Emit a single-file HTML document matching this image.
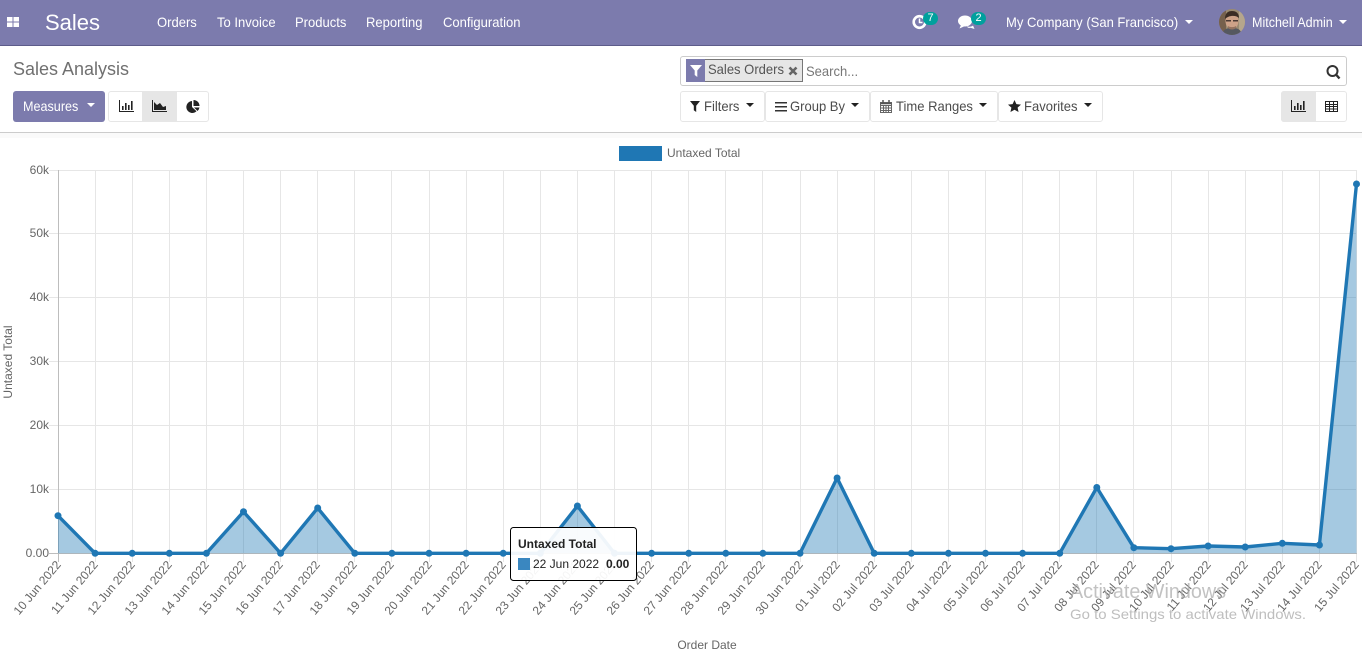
<!DOCTYPE html>
<html><head><meta charset="utf-8"><title>Sales Analysis</title>
<style>
html,body{margin:0;padding:0;background:#fff;width:1362px;height:657px;overflow:hidden;font-family:"Liberation Sans",sans-serif}
.a{position:absolute;white-space:nowrap}
#nav{position:absolute;left:0;top:0;width:1362px;height:45px;background:#7c7bad;border-bottom:1px solid #5d5c8a}
.n{position:absolute;top:12px;line-height:20px;font-size:14px;color:#fff;white-space:nowrap;transform-origin:left center;transform:scaleX(.93)}
.caret{position:absolute;width:0;height:0;border-left:4px solid transparent;border-right:4px solid transparent;border-top:4px solid #fff}
.caret.d{border-top-color:#222}
.btn{position:absolute;top:91px;height:29px;background:#fff;border:1px solid #e6e6e6;border-radius:3px}
.bt{position:absolute;top:96px;line-height:20px;font-size:14px;color:#4c4c4c;white-space:nowrap;transform-origin:left center;transform:scaleX(.93)}
.badge{position:absolute;top:12px;height:13px;width:15px;border-radius:7px;background:#00a09d;color:#fff;font-size:11px;line-height:13px;text-align:center}
svg{position:absolute;overflow:visible}
svg text{font-family:"Liberation Sans",sans-serif}
</style></head><body>

<div id="nav"></div>
<svg style="left:7px;top:17px" width="12" height="10" viewBox="0 0 12 10"><path fill="#fff" d="M0 0h5.500v4.500H0zM6.500 0h5.500v4.500H6.500zM0 5.500h5.500v4.500H0zM6.500 5.500h5.500v4.500H6.500z"/></svg>
<div class="a" style="left:45px;top:9px;line-height:28px;font-size:22px;color:#fff">Sales</div>
<div class="n" style="left:157px">Orders</div>
<div class="n" style="left:217px">To Invoice</div>
<div class="n" style="left:295px">Products</div>
<div class="n" style="left:366px">Reporting</div>
<div class="n" style="left:443px">Configuration</div>

<svg style="left:912px;top:14px" width="16" height="16" viewBox="0 0 16 16"><circle cx="7.500" cy="8" r="5.800" fill="none" stroke="#fff" stroke-width="2.600"/><path d="M7.500 4.500V8.500H10.500" fill="none" stroke="#fff" stroke-width="1.500"/></svg>
<div class="badge" style="left:923px">7</div>
<svg style="left:958px;top:15px" width="17" height="15" viewBox="0 0 17 15"><ellipse cx="7" cy="6" rx="7" ry="5.500" fill="#fff"/><path d="M3 10L1.500 13.500 7 11zM9 11.500c3 .5 5 0 6-1l1.500 3.500-4-1.200c-1.500.3-3 0-3.500-1.300z" fill="#fff"/></svg>
<div class="badge" style="left:971px">2</div>
<div class="n" style="left:1006px">My Company (San Francisco)</div>
<div class="caret" style="left:1185px;top:20px"></div>
<svg style="left:1219px;top:9px" width="26" height="26" viewBox="0 0 26 26"><defs><clipPath id="av"><circle cx="13" cy="13" r="13"/></clipPath></defs><g clip-path="url(#av)"><rect width="26" height="26" fill="#9a8a70"/><rect x="0" y="0" width="7" height="26" fill="#75604c"/><rect x="20" y="0" width="6" height="26" fill="#b5a68c"/><path d="M3 26c1-6 5-7 10-7s9 1 10 7z" fill="#555860"/><ellipse cx="13" cy="12" rx="6.500" ry="8" fill="#cda288"/><path d="M6 10c0-6 3-8 7-8s7 2 7 7c-3-3-10-3-14 1z" fill="#3a2c24"/><path d="M7 11h5v1.500H7zM14 11h5v1.500h-5z" fill="#4a3a34"/><path d="M9 17c2 1.500 6 1.500 8 0v2c-2 2-6 2-8 0z" fill="#94735f"/></g></svg>
<div class="n" style="left:1252px;transform:scaleX(.895)">Mitchell Admin</div>
<div class="caret" style="left:1339px;top:20px"></div>

<div class="a" style="left:13px;top:58px;line-height:22px;font-size:18px;color:#707070">Sales Analysis</div>

<div class="a" style="left:13px;top:91px;width:92px;height:31px;background:#7c7bad;border-radius:3px"></div>
<div class="bt" style="left:23px;color:#fff;transform:scaleX(.9)">Measures</div>
<div class="caret" style="left:87px;top:103px"></div>

<div class="a" style="left:108px;top:91px;width:99px;height:29px;background:#fff;border:1px solid #e6e6e6;border-radius:3px"></div>
<div class="a" style="left:142px;top:92px;width:35px;height:29px;background:#e6e6e6"></div>
<svg style="left:119px;top:100px" width="15" height="13" viewBox="0 0 15 13"><path fill="#222" d="M0 0h1v11h14v1H0z"/><path fill="#222" d="M3 6h1.600v4H3zM6 3h1.600v7H6zM9 5h1.600v5H9zM12 1h1.600v9H12z"/></svg>
<svg style="left:152px;top:100px" width="15" height="13" viewBox="0 0 15 13"><path fill="#222" d="M0 0h1v11h14v1H0z"/><path fill="#222" d="M2 10V2l3 3 3-2 3 4 3-1v4z"/></svg>
<svg style="left:186px;top:100px" width="14" height="13" viewBox="0 0 14 13"><path fill="#222" d="M6 1v6l4.500 4.300A6 6 0 1 1 6 1z"/><path fill="#222" d="M7.500 0A6 6 0 0 1 13.500 6H7.500z"/><path fill="#222" d="M8 7.500h5.500A6 6 0 0 1 11.500 11z"/></svg>

<div class="a" style="left:680px;top:56px;width:665px;height:28px;border:1px solid #ccc;border-radius:3px;background:#fff"></div>
<div class="a" style="left:686px;top:59px;width:115px;height:21px;background:#e6e6e6;border:1px solid #777"></div>
<div class="a" style="left:686px;top:59px;width:19px;height:23px;background:#7c7bad"></div>
<svg style="left:690px;top:65px" width="12" height="12" viewBox="0 0 12 12"><path fill="#fff" d="M0 0h12L7.300 5.500V12L4.700 10V5.500z"/></svg>
<div class="a" style="left:708px;top:60px;line-height:18px;font-size:14px;color:#555;transform-origin:left center;transform:scaleX(.93)">Sales Orders</div>
<svg style="left:788px;top:66px" width="10" height="10" viewBox="0 0 10 10"><path d="M1.500 1.500l7 7M8.500 1.500l-7 7" stroke="#666" stroke-width="2.600"/></svg>
<div class="a" style="left:806px;top:62px;line-height:18px;font-size:14px;color:#777;transform-origin:left center;transform:scaleX(.93)">Search...</div>
<svg style="left:1326px;top:65px" width="15" height="15" viewBox="0 0 15 15"><circle cx="6.500" cy="6" r="5" fill="none" stroke="#333" stroke-width="2"/><path d="M10 9.500L13.500 13.500" stroke="#333" stroke-width="2.400"/></svg>

<div class="btn" style="left:680px;width:83px"></div>
<svg style="left:690px;top:101px" width="10" height="11" viewBox="0 0 10 11"><path fill="#222" d="M0 0h10L6.200 4.800V11L3.800 9.300V4.800z"/></svg>
<div class="bt" style="left:704px">Filters</div>
<div class="caret d" style="left:746px;top:103px"></div>

<div class="btn" style="left:765px;width:103px"></div>
<svg style="left:775px;top:102px" width="12" height="10" viewBox="0 0 12 10"><path fill="#333" d="M0 0h12v1.500H0zM0 4h12v1.500H0zM0 8h12v1.500H0z"/></svg>
<div class="bt" style="left:790px">Group By</div>
<div class="caret d" style="left:851px;top:103px"></div>

<div class="btn" style="left:870px;width:126px"></div>
<svg style="left:880px;top:100px" width="12" height="13" viewBox="0 0 12 13"><path fill="none" stroke="#666" d="M.5 2.500h11v10H.5zM.5 5.500h11M.5 8h11M.5 10.500h11M3.500 5.500v7M6 5.500v7M8.500 5.500v7"/><path stroke="#555" stroke-width="1.500" d="M3 0v3M9 0v3M.5 3.500h11"/></svg>
<div class="bt" style="left:896px">Time Ranges</div>
<div class="caret d" style="left:979px;top:103px"></div>

<div class="btn" style="left:998px;width:103px"></div>
<svg style="left:1008px;top:100px" width="13" height="12" viewBox="0 0 13 12"><path fill="#222" d="M6.500 0l1.900 4.100 4.600.5-3.400 3 .950 4.400L6.500 9.800 2.450 12l.950-4.400-3.400-3 4.600-.5z"/></svg>
<div class="bt" style="left:1024px">Favorites</div>
<div class="caret d" style="left:1084px;top:103px"></div>

<div class="a" style="left:1281px;top:91px;width:64px;height:29px;border:1px solid #e6e6e6;border-radius:3px;background:#fff"></div>
<div class="a" style="left:1281px;top:91px;width:35px;height:31px;background:#e6e6e6;border-radius:3px 0 0 3px"></div>
<svg style="left:1291px;top:100px" width="15" height="13" viewBox="0 0 15 13"><path fill="#222" d="M0 0h1v11h14v1H0z"/><path fill="#222" d="M3 6h1.600v4H3zM6 3h1.600v7H6zM9 5h1.600v5H9zM12 1h1.600v9H12z"/></svg>
<svg style="left:1325px;top:101px" width="13" height="11" viewBox="0 0 13 11"><path fill="none" stroke="#222" d="M.5.500h12v10H.5zM.5 3.500h12M.5 5.500h12M.5 8h12M4.500.5v10M8.500.5v10"/></svg>

<div class="a" style="left:0;top:132px;width:1362px;height:1px;background:#ccc"></div>
<div class="a" style="left:0;top:133px;width:1362px;height:5px;background:#fafafa"></div>

<svg style="left:0;top:0" width="1362" height="657" viewBox="0 0 1362 657">
<rect x="619" y="146" width="43" height="15" fill="#1f77b4"/>
<text x="667" y="157" font-size="12" fill="#666">Untaxed Total</text>

<path stroke="#e6e6e6" fill="none" d="M49 170.500H1357M49 233.500H1357M49 297.500H1357M49 361.500H1357M49 425.500H1357M49 489.500H1357
M95.500 170V562M132.500 170V562M169.500 170V562M206.500 170V562M243.500 170V562M280.500 170V562M317.500 170V562M354.500 170V562M391.500 170V562M429.500 170V562M466.500 170V562M503.500 170V562M540.500 170V562M577.500 170V562M614.500 170V562M651.500 170V562M688.500 170V562M725.500 170V562M762.500 170V562M800.500 170V562M837.500 170V562M874.500 170V562M911.500 170V562M948.500 170V562M985.500 170V562M1022.500 170V562M1059.500 170V562M1096.500 170V562M1133.500 170V562M1171.500 170V562M1208.500 170V562M1245.500 170V562M1282.500 170V562M1319.500 170V562M1356.500 170V562"/>
<path stroke="#bdbdbd" fill="none" d="M58.500 170V562M49 553.500H1357"/>

<g font-size="12" fill="#666" text-anchor="end">
<text x="49" y="174">60k</text><text x="49" y="237">50k</text><text x="49" y="301">40k</text><text x="49" y="365">30k</text><text x="49" y="429">20k</text><text x="49" y="493">10k</text><text x="49" y="557">0.00</text>
</g>
<text transform="translate(12,362) rotate(-90)" font-size="12" fill="#666" text-anchor="middle">Untaxed Total</text>
<text x="707" y="649" font-size="12" fill="#666" text-anchor="middle">Order Date</text>

<path fill="#1f77b4" fill-opacity=".4" d="M58 553.300V515.700L95.100 553.300H206.400L243.500 511.700 280.600 553.300 317.700 508 354.800 553.300H540.300L577.400 506 614.500 553.300H800L837.100 478 874.200 553.300H1059.700L1096.800 487.500 1133.900 547.700 1171 548.700 1208.100 546 1245.200 547 1282.300 543.300 1319.400 545 1356.500 184V553.300z"/>
<path fill="none" stroke="#1f77b4" stroke-width="3.400" stroke-linejoin="round" d="M58 515.700L95.100 553.300H206.400L243.500 511.700 280.600 553.300 317.700 508 354.800 553.300H540.300L577.400 506 614.500 553.300H800L837.100 478 874.200 553.300H1059.700L1096.800 487.500 1133.900 547.700 1171 548.700 1208.100 546 1245.200 547 1282.300 543.300 1319.400 545 1356.500 184"/>
<g fill="#1f77b4">
<circle cx="58" cy="515.700" r="3.500"/><circle cx="95.100" cy="553.300" r="3.500"/><circle cx="132.200" cy="553.300" r="3.500"/><circle cx="169.300" cy="553.300" r="3.500"/><circle cx="206.400" cy="553.300" r="3.500"/><circle cx="243.500" cy="511.700" r="3.500"/><circle cx="280.600" cy="553.300" r="3.500"/><circle cx="317.700" cy="508" r="3.500"/><circle cx="354.800" cy="553.300" r="3.500"/><circle cx="391.900" cy="553.300" r="3.500"/><circle cx="429" cy="553.300" r="3.500"/><circle cx="466.100" cy="553.300" r="3.500"/><circle cx="503.200" cy="553.300" r="3.500"/><circle cx="540.300" cy="553.300" r="3.500"/><circle cx="577.400" cy="506" r="3.500"/><circle cx="614.500" cy="553.300" r="3.500"/><circle cx="651.600" cy="553.300" r="3.500"/><circle cx="688.700" cy="553.300" r="3.500"/><circle cx="725.800" cy="553.300" r="3.500"/><circle cx="762.900" cy="553.300" r="3.500"/><circle cx="800" cy="553.300" r="3.500"/><circle cx="837.100" cy="478" r="3.500"/><circle cx="874.200" cy="553.300" r="3.500"/><circle cx="911.300" cy="553.300" r="3.500"/><circle cx="948.400" cy="553.300" r="3.500"/><circle cx="985.500" cy="553.300" r="3.500"/><circle cx="1022.600" cy="553.300" r="3.500"/><circle cx="1059.700" cy="553.300" r="3.500"/><circle cx="1096.800" cy="487.500" r="3.500"/><circle cx="1133.900" cy="547.700" r="3.500"/><circle cx="1171" cy="548.700" r="3.500"/><circle cx="1208.100" cy="546" r="3.500"/><circle cx="1245.200" cy="547" r="3.500"/><circle cx="1282.300" cy="543.300" r="3.500"/><circle cx="1319.400" cy="545" r="3.500"/><circle cx="1356.500" cy="184" r="3.500"/>
</g>

<g font-size="12" fill="#666" text-anchor="end" transform="translate(-1.500,-1)">
<text transform="translate(63,566) rotate(-50)">10 Jun 2022</text>
<text transform="translate(100,566) rotate(-50)">11 Jun 2022</text>
<text transform="translate(137,566) rotate(-50)">12 Jun 2022</text>
<text transform="translate(174,566) rotate(-50)">13 Jun 2022</text>
<text transform="translate(211,566) rotate(-50)">14 Jun 2022</text>
<text transform="translate(248,566) rotate(-50)">15 Jun 2022</text>
<text transform="translate(285,566) rotate(-50)">16 Jun 2022</text>
<text transform="translate(322,566) rotate(-50)">17 Jun 2022</text>
<text transform="translate(359,566) rotate(-50)">18 Jun 2022</text>
<text transform="translate(396,566) rotate(-50)">19 Jun 2022</text>
<text transform="translate(434,566) rotate(-50)">20 Jun 2022</text>
<text transform="translate(471,566) rotate(-50)">21 Jun 2022</text>
<text transform="translate(508,566) rotate(-50)">22 Jun 2022</text>
<text transform="translate(545,566) rotate(-50)">23 Jun 2022</text>
<text transform="translate(582,566) rotate(-50)">24 Jun 2022</text>
<text transform="translate(619,566) rotate(-50)">25 Jun 2022</text>
<text transform="translate(656,566) rotate(-50)">26 Jun 2022</text>
<text transform="translate(693,566) rotate(-50)">27 Jun 2022</text>
<text transform="translate(730,566) rotate(-50)">28 Jun 2022</text>
<text transform="translate(767,566) rotate(-50)">29 Jun 2022</text>
<text transform="translate(805,566) rotate(-50)">30 Jun 2022</text>
<text transform="translate(842,566) rotate(-50)">01 Jul 2022</text>
<text transform="translate(879,566) rotate(-50)">02 Jul 2022</text>
<text transform="translate(916,566) rotate(-50)">03 Jul 2022</text>
<text transform="translate(953,566) rotate(-50)">04 Jul 2022</text>
<text transform="translate(990,566) rotate(-50)">05 Jul 2022</text>
<text transform="translate(1027,566) rotate(-50)">06 Jul 2022</text>
<text transform="translate(1064,566) rotate(-50)">07 Jul 2022</text>
<text transform="translate(1101,566) rotate(-50)">08 Jul 2022</text>
<text transform="translate(1138,566) rotate(-50)">09 Jul 2022</text>
<text transform="translate(1176,566) rotate(-50)">10 Jul 2022</text>
<text transform="translate(1213,566) rotate(-50)">11 Jul 2022</text>
<text transform="translate(1250,566) rotate(-50)">12 Jul 2022</text>
<text transform="translate(1287,566) rotate(-50)">13 Jul 2022</text>
<text transform="translate(1324,566) rotate(-50)">14 Jul 2022</text>
<text transform="translate(1361,566) rotate(-50)">15 Jul 2022</text>
</g>

<rect x="510.500" y="527.500" width="126" height="53" rx="3" fill="#fff" fill-opacity=".93" stroke="#000"/>
<text x="518" y="548" font-size="12" font-weight="bold" fill="#222">Untaxed Total</text>
<rect x="518" y="558" width="12" height="12" fill="#3a87c0"/>
<text x="533" y="568" font-size="12" fill="#222">22 Jun 2022</text>
<text x="606" y="568" font-size="12" font-weight="bold" fill="#222">0.00</text>

<text x="1070" y="598" font-size="20" fill="#a8a8a8" fill-opacity=".7" textLength="156" lengthAdjust="spacingAndGlyphs">Activate Windows</text>
<text x="1070" y="619" font-size="14" fill="#a8a8a8" fill-opacity=".75" textLength="236" lengthAdjust="spacingAndGlyphs">Go to Settings to activate Windows.</text>
</svg>
</body></html>
